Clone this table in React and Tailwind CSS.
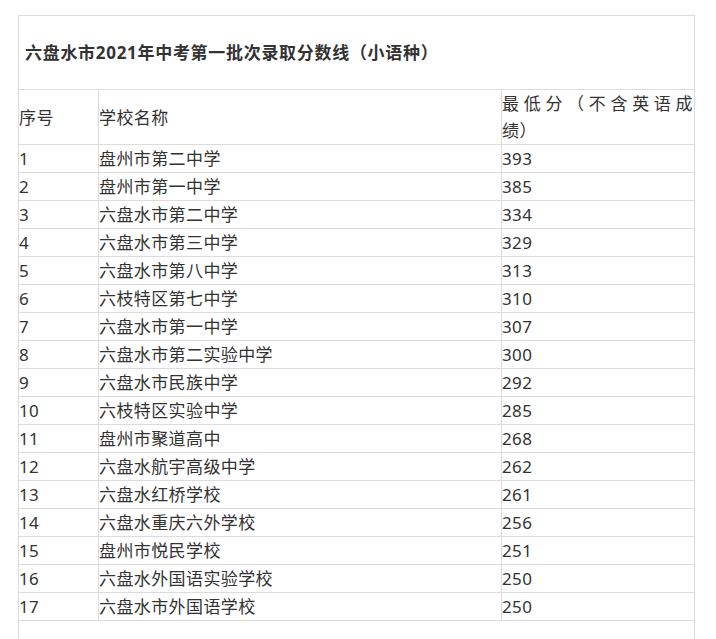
import React from "react";

const rows = [
  ["1", "盘州市第二中学", "393"],
  ["2", "盘州市第一中学", "385"],
  ["3", "六盘水市第二中学", "334"],
  ["4", "六盘水市第三中学", "329"],
  ["5", "六盘水市第八中学", "313"],
  ["6", "六枝特区第七中学", "310"],
  ["7", "六盘水市第一中学", "307"],
  ["8", "六盘水市第二实验中学", "300"],
  ["9", "六盘水市民族中学", "292"],
  ["10", "六枝特区实验中学", "285"],
  ["11", "盘州市聚道高中", "268"],
  ["12", "六盘水航宇高级中学", "262"],
  ["13", "六盘水红桥学校", "261"],
  ["14", "六盘水重庆六外学校", "256"],
  ["15", "盘州市悦民学校", "251"],
  ["16", "六盘水外国语实验学校", "250"],
  ["17", "六盘水市外国语学校", "250"],
];

const cell = "border-r border-b border-[#dcdcdc] leading-[27px]";

export default function App() {
  return (
    <div className="min-h-[639px] bg-white pt-[15px] pl-[18px] text-[#333] font-['Noto_Sans','Noto_Sans_CJK_SC',sans-serif] text-[17px] tracking-[0.4px]">
      <div className="grid w-[677px] grid-cols-[80px_403px_193px] border-l border-t border-[#dcdcdc]">
        <div className="col-span-3 flex h-[74px] items-center border-r border-b border-[#dcdcdc] pl-[6px] text-[17px] font-bold tracking-[0.7px] [text-spacing-trim:space-all]">
          六盘水市2021年中考第一批次录取分数线（小语种）
        </div>

        <div className={`${cell} flex h-[55px] items-center`}>序号</div>
        <div className={`${cell} flex h-[55px] items-center`}>学校名称</div>
        <div className={`${cell} h-[55px]`}>
          <div className="flex justify-between pr-[1px]">
            {"最低分（不含英语成".split("").map((c, i) => (
              <span key={i}>{c}</span>
            ))}
          </div>
          <div>绩）</div>
        </div>

        {rows.map((r) => (
          <React.Fragment key={r[0]}>
            <div className={`${cell} h-[28px]`}>{r[0]}</div>
            <div className={`${cell} h-[28px]`}>{r[1]}</div>
            <div className={`${cell} h-[28px]`}>{r[2]}</div>
          </React.Fragment>
        ))}

        <div className="col-span-3 h-[40px] border-r border-[#dcdcdc]"></div>
      </div>
    </div>
  );
}
